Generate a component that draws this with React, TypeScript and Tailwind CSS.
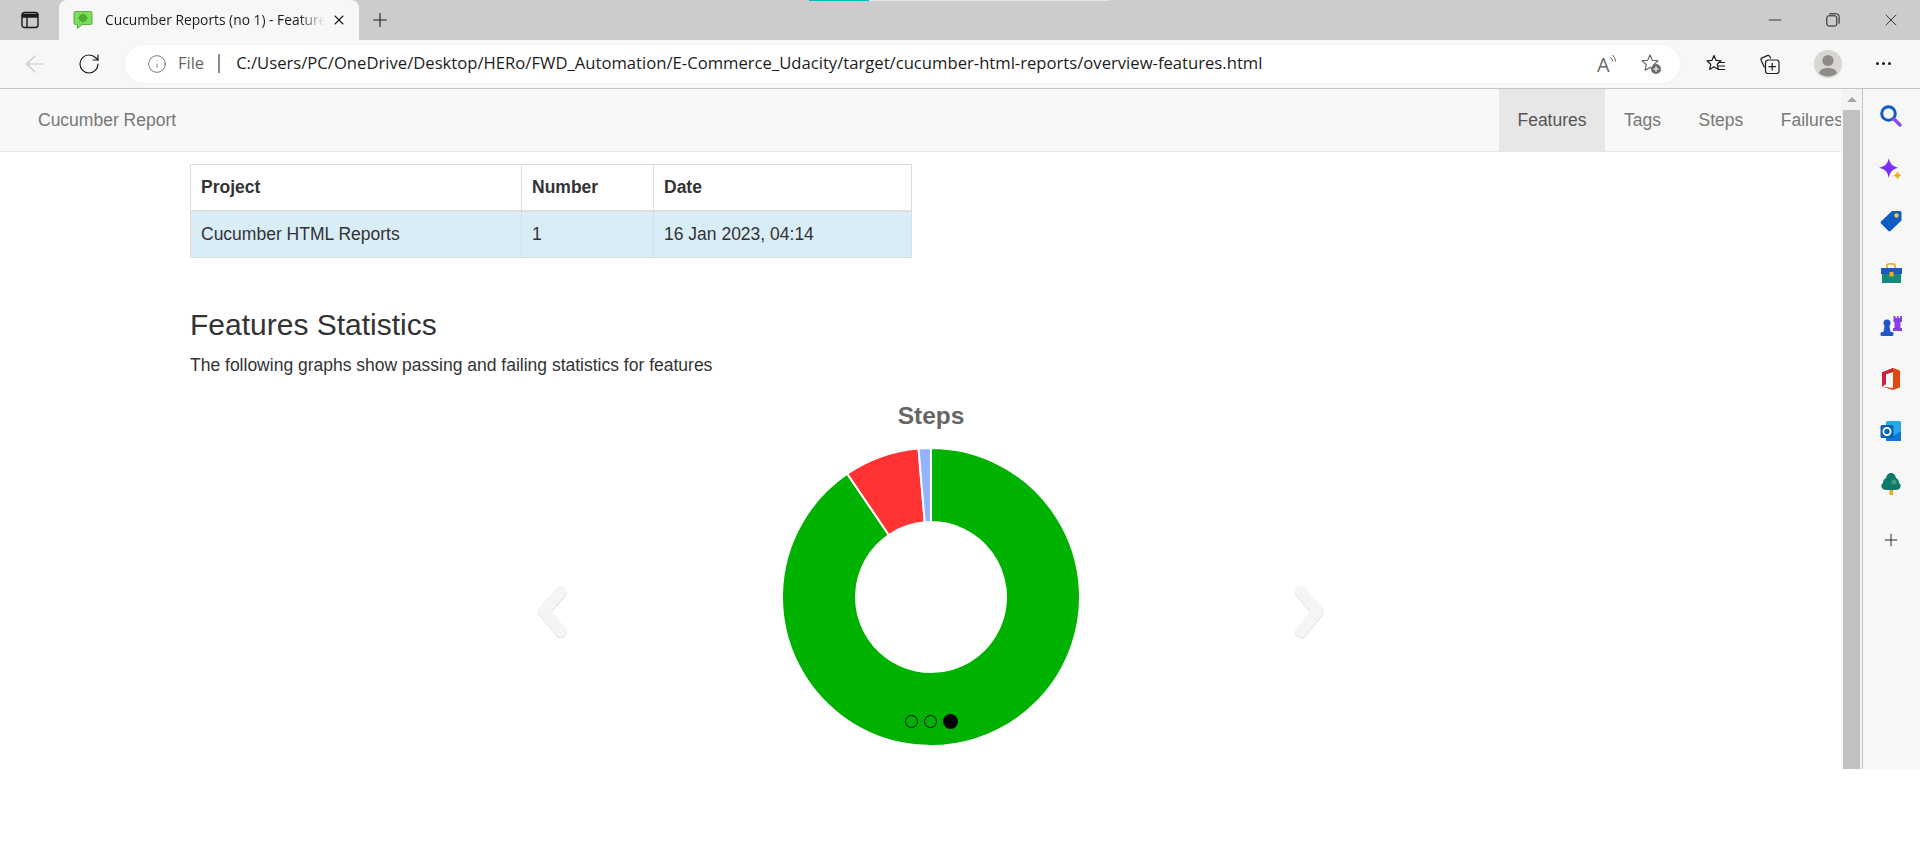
import { ArrowLeft, Info, Minus, Plus, RotateCw, X } from "lucide-react";

const sans = "font-['Liberation_Sans',Arial,sans-serif]";
const ui = "font-['Open_Sans','Noto_Sans',sans-serif]";

const CX = 150;
const CY = 150;

function wedge(start: number, end: number, r1: number, r2: number) {
  const pt = (r: number, a: number) => {
    const t = ((a - 90) * Math.PI) / 180;
    return `${(CX + r * Math.cos(t)).toFixed(2)} ${(CY + r * Math.sin(t)).toFixed(2)}`;
  };
  const large = end - start > 180 ? 1 : 0;
  return `M${pt(r2, start)}A${r2} ${r2} 0 ${large} 1 ${pt(r2, end)}L${pt(r1, end)}A${r1} ${r1} 0 ${large} 0 ${pt(r1, start)}Z`;
}

function Donut() {
  const parts = [
    { from: 0, to: 325.8, color: "#00b200" },
    { from: 325.8, to: 355.2, color: "#ff3333" },
    { from: 355.2, to: 360, color: "#92b4ff" },
  ];
  return (
    <svg width="300" height="300" viewBox="0 0 300 300" className="block">
      {parts.map((p) => (
        <path key={p.from} d={wedge(p.from, p.to, 75, 149)} fill={p.color} stroke="#fff" strokeWidth="2" />
      ))}
    </svg>
  );
}

function Chevron({ flip }: { flip?: boolean }) {
  return (
    <svg width="34" height="52" viewBox="0 0 34 52" className={flip ? "-scale-x-100" : ""}>
      <path d="M26 6.500 L9 26 L26 46.500" fill="none" stroke="#e2e2e2" strokeWidth="12" strokeLinecap="round" strokeLinejoin="round" />
      <path d="M26 5.500 L9 25 L26 45.500" fill="none" stroke="#f5f5f5" strokeWidth="11.500" strokeLinecap="round" strokeLinejoin="round" />
    </svg>
  );
}

function Favicon() {
  return (
    <svg width="20" height="20" viewBox="0 0 20 20">
      <path d="M2.500 1.500h15a1.500 1.500 0 0 1 1.500 1.500v10a1.500 1.500 0 0 1-1.500 1.500H9l-4.500 4v-4h-2A1.500 1.500 0 0 1 1 13V3a1.500 1.500 0 0 1 1.500-1.500z" fill="#7ddc5a" stroke="#3f9e2a" strokeWidth="0.8" />
      <circle cx="10" cy="8" r="3.800" fill="#4aa834" />
      <circle cx="10" cy="8" r="1.500" fill="#8fe26f" />
      <path d="M10 3v10M5 8h10M6.500 4.500l7 7M13.500 4.500l-7 7" stroke="#4aa834" strokeWidth="1" />
    </svg>
  );
}

function TabsIcon() {
  return (
    <svg width="18" height="18" viewBox="0 0 18 18" fill="none" stroke="#1c1c1c" strokeWidth="1.400">
      <rect x="1" y="1.500" width="16" height="15" rx="2.500" />
      <path d="M1.500 3.500h15v2.500h-15z" fill="#1c1c1c" />
      <path d="M6 6v10" />
    </svg>
  );
}

function RestoreIcon() {
  return (
    <svg width="14" height="14" viewBox="0 0 14 14" fill="none" stroke="#1c1c1c" strokeWidth="1">
      <rect x="0.800" y="2.800" width="10" height="10.200" rx="2" />
      <path d="M3.200 0.800h7.300a2.600 2.600 0 0 1 2.600 2.600v7.200" />
    </svg>
  );
}

function ReadAloud() {
  return (
    <svg width="22" height="20" viewBox="0 0 22 20" fill="none" stroke="#6b6b6b" strokeWidth="1" className="overflow-visible">
      <text x="0" y="18" fontSize="20" fill="#6b6b6b" stroke="none" fontFamily="'Open Sans',sans-serif">
        A
      </text>
      <path d="M13.500 3.500a5 5 0 0 1 2 4" />
      <path d="M15.500 1a8 8 0 0 1 3 6.500" />
    </svg>
  );
}

const starPath = "M10 2l2.300 5.200 5.700.6-4.300 3.800 1.200 5.600L10 14.400 5.100 17.200l1.200-5.600L2 7.800l5.700-.6z";

function StarPlus() {
  return (
    <svg width="22" height="22" viewBox="0 0 22 22">
      <path d={starPath} fill="none" stroke="#5a5a5a" strokeWidth="1.100" strokeLinejoin="round" />
      <circle cx="16" cy="16" r="5" fill="#6b6b6b" />
      <path d="M16 13.200v5.600M13.200 16h5.600" stroke="#fff" strokeWidth="1.200" />
    </svg>
  );
}

function Favorites() {
  return (
    <svg width="22" height="22" viewBox="0 0 22 22" fill="none" stroke="#1c1c1c" strokeWidth="1.200">
      <path d="M9 2.500l2 4.800 5 .5-3.800 3.400 1.100 5.200L9 13.800l-4.300 2.600 1.100-5.200L2 7.800l5-.5z" strokeLinejoin="round" />
      <path d="M13.500 9.500H20M13 13h7M13 16.500h7" />
    </svg>
  );
}

function Collections() {
  return (
    <svg width="22" height="22" viewBox="0 0 22 22" fill="none" stroke="#1c1c1c" strokeWidth="1.200">
      <path d="M5.500 14.500L2.200 7.500a2 2 0 0 1 1-2.600l5-2.300a2 2 0 0 1 2.600 1l.9 2" />
      <rect x="6.500" y="7" width="13.500" height="13.500" rx="2.500" />
      <path d="M13.200 10v7.500M9.500 13.700h7.500" />
    </svg>
  );
}

function Avatar() {
  return (
    <svg width="28" height="28" viewBox="0 0 28 28">
      <circle cx="14" cy="14" r="14" fill="#d8d6d2" />
      <circle cx="14" cy="10.500" r="5.600" fill="#8f8b86" />
      <path d="M4.800 23a9.500 6.500 0 0 1 18.400 0 A14 14 0 0 1 4.800 23z" fill="#8f8b86" />
    </svg>
  );
}

const sideIcons = [
  <svg key="search" width="24" height="24" viewBox="0 0 24 24" fill="none">
    <circle cx="9.500" cy="9.500" r="6.800" stroke="#1259c9" strokeWidth="3" />
    <path d="M15 15l6 6" stroke="#8a4de0" strokeWidth="3.400" strokeLinecap="round" />
  </svg>,
  <svg key="spark" width="26" height="26" viewBox="0 0 24 24" className="mt-[3px]">
    <path d="M10 1c1 5 3 7.500 8.500 9-5.500 1.500-7.500 4-8.500 9.500C9 14 7 11.500 1 10c6-1.500 8-4 9-9z" fill="#7b2ff2" />
    <path d="M18 13c.5 2.300 1.400 3.200 4 4-2.600.8-3.500 1.700-4 4-.5-2.300-1.400-3.200-4-4 2.600-.8 3.500-1.700 4-4z" fill="#f2b010" />
  </svg>,
  <svg key="tag" width="24" height="24" viewBox="0 0 24 24">
    <path d="M13 2h8a1.500 1.500 0 0 1 1.500 1.500v8L11.500 22a1.500 1.500 0 0 1-2 0L2 14.500a1.500 1.500 0 0 1 0-2z" fill="#0f5cc4" />
    <circle cx="17.500" cy="6.500" r="2.200" fill="#f6c23a" />
  </svg>,
  <svg key="tools" width="24" height="24" viewBox="0 0 24 24">
    <path d="M8 6V3.500A1.500 1.500 0 0 1 9.500 2h5A1.500 1.500 0 0 1 16 3.500V6" fill="none" stroke="#e0a526" strokeWidth="1.600" />
    <rect x="2" y="6" width="21" height="6" fill="#1f55c4" />
    <rect x="3" y="12" width="19" height="9" fill="#138a7c" />
    <rect x="10.500" y="10" width="4" height="4.500" fill="#f2b010" />
  </svg>,
  <svg key="chess" width="24" height="24" viewBox="0 0 24 24">
    <circle cx="8" cy="9" r="3.500" fill="#1f55c4" />
    <path d="M5.500 12h5l1 6h-7z" fill="#1f55c4" />
    <rect x="1.500" y="18" width="13" height="4" rx="1.500" fill="#1f55c4" />
    <path d="M14.500 2h2v2h1.500V2h1.500v2H21V2h2v6h-1.500v6H23v3h-9v-3h1.500V8h-1z" fill="#8a3fe0" />
  </svg>,
  <svg key="office" width="24" height="24" viewBox="0 0 24 24">
    <path d="M14 1l7 2.500v17L14 23 3 19.500 14 21V5L7 7v10l-4 2.500V5.500z" fill="#e2480f" />
    <path d="M3 5.500L14 1v4L7 7v10l-4 2.500z" fill="#c9213f" />
  </svg>,
  <svg key="outlook" width="24" height="24" viewBox="0 0 24 24">
    <rect x="7" y="2" width="15" height="20" rx="1.500" fill="#28a8ea" />
    <path d="M7 12l7.500 5L22 12v10H7z" fill="#0f78d4" />
    <rect x="1.500" y="6" width="13" height="13" rx="1.500" fill="#0f62b8" />
    <circle cx="8" cy="12.500" r="3.600" fill="none" stroke="#fff" strokeWidth="1.800" />
  </svg>,
  <svg key="tree" width="24" height="24" viewBox="0 0 24 24">
    <rect x="10.500" y="17" width="3.500" height="6" fill="#eea71a" />
    <path d="M12 1c3 0 4.500 2.500 5 5 2.500 1 3 3 3 5 1.500 1 2 2.500 1.500 4-.5 2-2.500 3-4.500 3H7c-2 0-4-1-4.500-3-.5-1.500 0-3 1.500-4 0-2 .5-4 3-5 .5-2.500 2-5 5-5z" fill="#10796a" />
    <circle cx="15" cy="10" r="2.500" fill="#3aa17f" />
  </svg>,
  <Plus key="plus" size={20} strokeWidth={1.100} color="#1c1c1c" className="mt-[8px]" />,
];

function Scrollbar() {
  return (
    <div className="flex w-[22px] shrink-0 flex-col border-r border-[#c4c4c4] bg-[#f3f3f3] pl-[2px] pr-[2px]">
      <div className="flex h-[21px] items-center justify-center">
        <div className="h-0 w-0 border-x-[5px] border-b-[5px] border-x-transparent border-b-[#a3a3a3]" />
      </div>
      <div className="w-[17px] flex-1 bg-[#c1c1c1]" />
    </div>
  );
}

export default function App() {
  return (
    <div className="relative h-[851px] w-[1920px] overflow-hidden bg-white">
      <div className="absolute left-[809px] top-0 h-[1px] w-[60px] bg-[#00b7c3]" />
      <div className="absolute left-[869px] top-0 h-[1px] w-[240px] bg-[#e6e6e6]" />

      {/* title bar */}
      <div className={`flex h-10 items-center bg-[#cccccc] ${ui}`}>
        <div className="flex w-[59px] justify-center pl-px">
          <TabsIcon />
        </div>
        <div className="flex h-10 w-[300px] items-center rounded-t-lg bg-[#f7f7f7] pl-[14px]">
          <Favicon />
          <div className="ml-[12px] w-[220px] overflow-hidden whitespace-nowrap text-[13.800px] text-[#1c1c1c] [mask-image:linear-gradient(to_right,black_88%,transparent)]">
            Cucumber Reports (no 1) - Features
          </div>
          <X size={16} strokeWidth={1.600} color="#1c1c1c" className="ml-[6px]" />
        </div>
        <Plus size={22} strokeWidth={1.200} color="#1c1c1c" className="ml-[10px]" />
        <div className="flex-1" />
        <Minus size={20} strokeWidth={1} color="#1c1c1c" />
        <div className="ml-[40px] flex w-4 justify-center">
          <RestoreIcon />
        </div>
        <X size={20} strokeWidth={1} color="#1c1c1c" className="ml-[40px] mr-[19px]" />
      </div>

      {/* toolbar */}
      <div className={`flex h-[49px] items-center border-b border-[#c4c4c4] bg-[#f7f7f7] pb-[1px] ${ui}`}>
        <ArrowLeft size={28} strokeWidth={1} color="#c2c2c2" className="ml-[21px]" />
        <RotateCw size={24} strokeWidth={1.200} color="#1c1c1c" className="ml-[28px]" />
        <div className="ml-[24px] flex h-[38px] w-[1555px] items-center rounded-full bg-white pl-[22px] pr-[18px] shadow-[0_0_2px_rgba(0,0,0,0.06)]">
          <Info size={20} strokeWidth={1} color="#5f5f5f" />
          <span className="ml-[11px] text-[16.500px] text-[#666]">File</span>
          <span className="ml-[14px] h-[19px] w-[2px] bg-[#8a8a8a]" />
          <span className="ml-[16px] whitespace-nowrap text-[16.650px] text-[#1c1c1c]">
            C:/Users/PC/OneDrive/Desktop/HERo/FWD_Automation/E-Commerce_Udacity/target/cucumber-html-reports/overview-features.html
          </span>
          <div className="flex-1" />
          <ReadAloud />
          <div className="ml-[21px]">
            <StarPlus />
          </div>
        </div>
        <div className="ml-[25px]">
          <Favorites />
        </div>
        <div className="ml-[32px]">
          <Collections />
        </div>
        <div className="ml-[33px]">
          <Avatar />
        </div>
        <div className="ml-[34px] flex gap-[3px]">
          <span className="size-[3px] rounded-full bg-[#1c1c1c]" />
          <span className="size-[3px] rounded-full bg-[#1c1c1c]" />
          <span className="size-[3px] rounded-full bg-[#1c1c1c]" />
        </div>
      </div>

      {/* viewport */}
      <div className="flex h-[680px]">
        <div className={`w-[1841px] shrink-0 overflow-hidden text-[17.500px] text-[#333] ${sans}`}>
          <nav className="flex h-[63px] items-stretch border-b border-[#e7e7e7] bg-[#f8f8f8] text-[#777]">
            <div className="flex items-center pl-[38px]">Cucumber Report</div>
            <div className="flex-1" />
            <div className="flex items-center bg-[#e7e7e7] px-[18.750px] text-[#555]">Features</div>
            <div className="flex items-center px-[18.750px]">Tags</div>
            <div className="flex items-center px-[18.750px]">Steps</div>
            <div className="flex w-[79px] items-center overflow-hidden whitespace-nowrap pl-[18.750px]">Failures</div>
          </nav>

          <div className="ml-[190px] w-[1482px]">
            <table className="mt-[12px] w-[722px] table-fixed border-collapse border border-[#ddd] leading-[25px]">
              <thead>
                <tr className="h-[46px] border-b-2 border-[#ddd]">
                  <th className="w-[331px] border-r border-[#ddd] px-[10px] text-left font-bold">Project</th>
                  <th className="w-[132px] border-r border-[#ddd] px-[10px] text-left font-bold">Number</th>
                  <th className="px-[10px] text-left font-bold">Date</th>
                </tr>
              </thead>
              <tbody>
                <tr className="h-[47px] bg-[#d9edf7]">
                  <td className="border-r border-[#ddd] px-[10px]">Cucumber HTML Reports</td>
                  <td className="border-r border-[#ddd] px-[10px]">1</td>
                  <td className="px-[10px]">16 Jan 2023, 04:14</td>
                </tr>
              </tbody>
            </table>

            <h2 className="mt-[50px] text-[30px] leading-[33px]">Features Statistics</h2>
            <p className="mt-[12px] leading-[25px]">The following graphs show passing and failing statistics for features</p>

            <div className="relative mt-[23px] flex flex-col items-center">
              <div className="text-[24.500px] font-bold leading-[30px] text-[#666]">Steps</div>
              <div className="mt-[16px]">
                <Donut />
              </div>
              <div className="absolute left-[345px] top-[185px]">
                <Chevron />
              </div>
              <div className="absolute right-[345px] top-[185px]">
                <Chevron flip />
              </div>
              <div className="absolute top-[313px] flex items-center gap-[6px]">
                <span className="size-[13px] rounded-full border border-black" />
                <span className="size-[13px] rounded-full border border-black" />
                <span className="size-[15px] rounded-full bg-black" />
              </div>
            </div>
          </div>
        </div>

        <Scrollbar />

        <div className="flex w-[57px] flex-col items-center bg-[#f7f7f7] pr-[2px] pt-[1px]">
          {sideIcons.map((icon) => (
            <div key={icon.key} className="flex h-[52.500px] items-center justify-center">
              {icon}
            </div>
          ))}
        </div>
      </div>
    </div>
  );
}
